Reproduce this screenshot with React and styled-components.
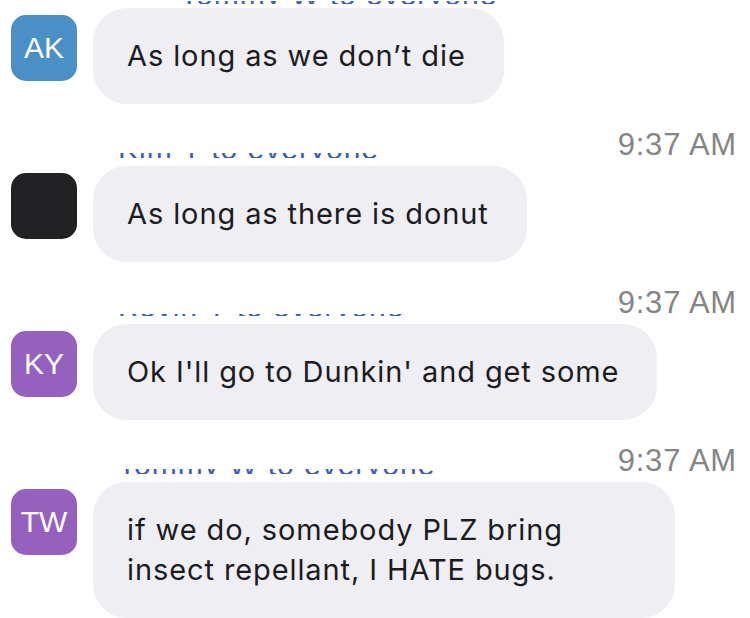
import React from "react";
import styled, { createGlobalStyle } from "styled-components";

const GlobalStyle = createGlobalStyle`
  html, body {
    margin: 0;
    padding: 0;
    background: #ffffff;
  }
  body {
    font-family: Inter, "Liberation Sans", Arial, sans-serif;
    -webkit-font-smoothing: antialiased;
  }
`;

const StyledChat = styled.div`
  width: 750px;
  height: 618px;
  overflow: hidden;
  box-sizing: border-box;
  padding: 0 13px 0 10px;
`;

const StyledGroup = styled.div`
  display: flex;
  flex-direction: column;
`;

// 이름 + 시간 줄
const StyledHeader = styled.div`
  display: flex;
  align-items: flex-end;
  justify-content: space-between;
  height: ${(props) => (props.first ? "8px" : "62px")};
  box-sizing: border-box;
  padding-bottom: ${(props) => (props.first ? "4px" : "8px")};
`;

// 이름은 아래쪽만 살짝 보임
const StyledNameClip = styled.div`
  height: ${(props) => props.clip}px;
  overflow: hidden;
  margin-left: ${(props) => props.left}px;
  display: flex;
  align-items: flex-end;
`;

const StyledName = styled.span`
  color: #3d5db8;
  font-family: "Liberation Sans", Arial, sans-serif;
  font-size: 30px;
  line-height: 30px;
  letter-spacing: 1px;
  white-space: nowrap;
  margin-bottom: -6px;
`;

const StyledTime = styled.span`
  color: #858585;
  font-family: "Liberation Sans", Arial, sans-serif;
  font-size: 31px;
  line-height: 31px;
  margin-bottom: -2px;
  letter-spacing: 0.8px;
`;

const StyledRow = styled.div`
  display: flex;
  align-items: flex-start;
  gap: 16px;
`;

const StyledAvatar = styled.div`
  flex: none;
  width: 66px;
  height: 66px;
  margin-top: 7px;
  margin-left: 1px;
  border-radius: 15px;
  background: ${(props) => props.color};
  color: #fff;
  display: flex;
  align-items: center;
  justify-content: center;
  font-family: "Liberation Sans", Arial, sans-serif;
  font-size: 30px;
`;

const StyledBubble = styled.div`
  box-sizing: border-box;
  background: #eeeef3;
  border-radius: 34px;
  padding: 28px 38px 28px 34px;
  max-width: 582px;
  color: #1c1c1f;
  font-size: 29px;
  line-height: 40px;
  letter-spacing: 0.9px;
`;

const messages = [
  {
    id: 1,
    name: "Tommy W to everyone",
    clip: 3,
    initials: "AK",
    color: "#4a8fc6",
    text: "As long as we don\u2019t die",
  },
  {
    id: 2,
    name: "Kim Y to everyone",
    clip: 5,
    time: "9:37 AM",
    initials: "",
    color: "#222224",
    text: "As long as there is donut",
  },
  {
    id: 3,
    name: "Kevin Y to everyone",
    clip: 2,
    time: "9:37 AM",
    initials: "KY",
    color: "#9661be",
    text: "Ok I'll go to Dunkin' and get some",
  },
  {
    id: 4,
    name: "Tommy W to everyone",
    clip: 5,
    time: "9:37 AM",
    initials: "TW",
    color: "#9661be",
    text: "if we do, somebody PLZ bring insect repellant, I HATE bugs.",
  },
];

function App() {
  return (
    <StyledChat>
      <GlobalStyle />
      {messages.map((msg, index) => (
        <StyledGroup key={msg.id}>
          <StyledHeader first={index === 0}>
            <StyledNameClip clip={msg.clip} left={index === 0 ? 170 : 108}>
              <StyledName>{msg.name}</StyledName>
            </StyledNameClip>
            {msg.time && <StyledTime>{msg.time}</StyledTime>}
          </StyledHeader>
          <StyledRow>
            <StyledAvatar color={msg.color}>{msg.initials}</StyledAvatar>
            <StyledBubble>{msg.text}</StyledBubble>
          </StyledRow>
        </StyledGroup>
      ))}
    </StyledChat>
  );
}

export default App;
